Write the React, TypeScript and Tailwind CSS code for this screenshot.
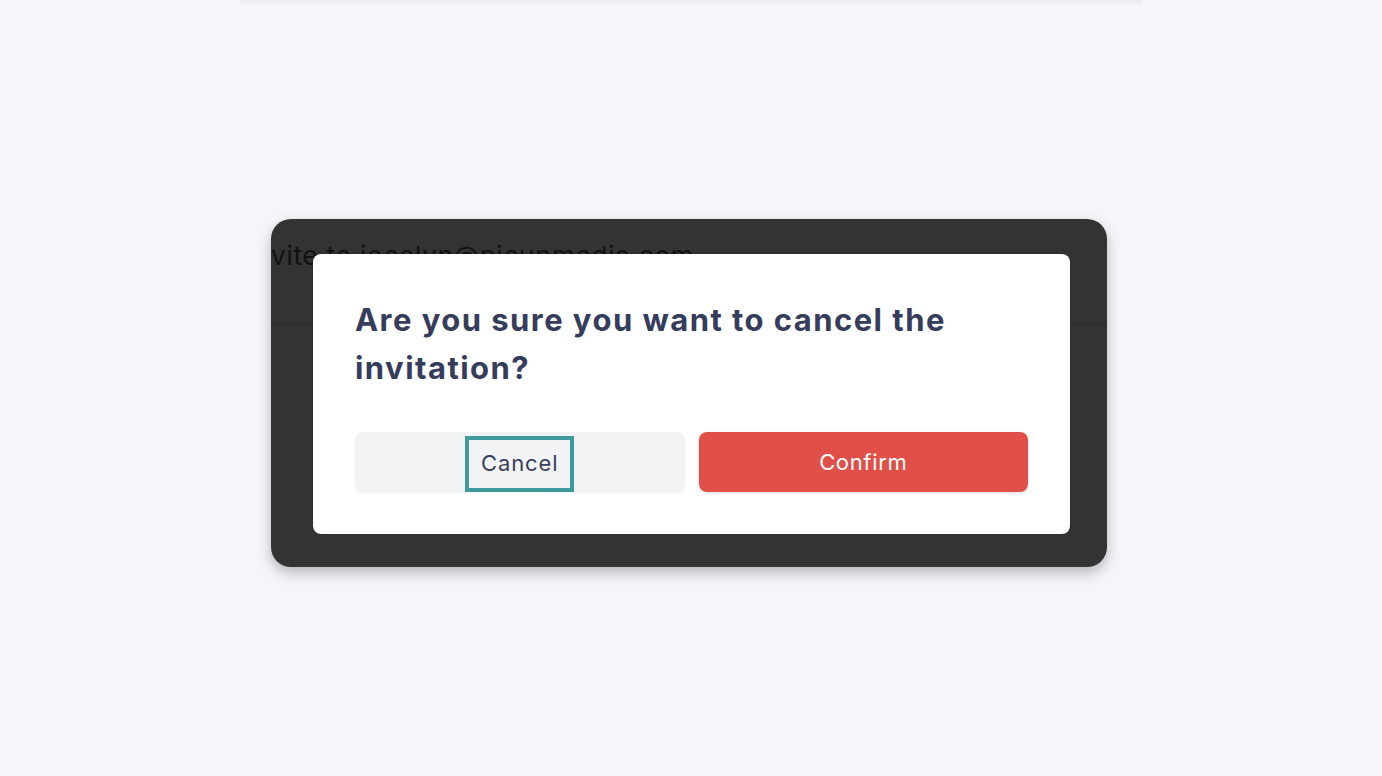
export default function App() {
  return (
    <div className="relative flex min-h-[776px] w-full items-center justify-center bg-[#f5f5fa] font-['Inter',sans-serif]">
      <div className="absolute left-[240px] right-[240px] top-0 h-[7px] bg-gradient-to-b from-[#ebebf0] to-[#f5f5fa]" />

      <div className="relative mb-[-10px] mr-[4px] h-[348px] w-[836px] overflow-hidden rounded-[20px] bg-[#333333] shadow-[0_6px_14px_rgba(0,0,0,0.25)]">
        <div className="h-[105px] border-b border-[#2b2b2b] pt-[20px]">
          <p className="whitespace-nowrap text-[26px] leading-[34px] tracking-[0.03em] text-[#111111]">vite to jocelyn@picupmedia.com</p>
        </div>

        <div className="absolute left-[42px] top-[35px] w-[757px] rounded-[8px] bg-white px-[42px] pb-[42px] pt-[42px] shadow-[0_0_2px_rgba(0,0,0,0.2)]">
          <h2 className="text-[31px] font-bold leading-[48px] tracking-[0.047em] text-[#363c5b]">
            Are you sure you want to cancel the invitation?
          </h2>
          <div className="mt-[40px] grid grid-cols-2 gap-[14px]">
            <button className="flex h-[60px] items-center justify-center rounded-[8px] bg-[#f2f3f5] shadow-[0_1px_2px_rgba(0,0,0,0.05)]">
              <span className="mt-[4px] flex h-[56px] items-center border-4 border-[#3f9a9e] px-[12px] pb-[2px] text-[22px] tracking-[0.04em] text-[#3a3f5c]">
                Cancel
              </span>
            </button>
            <button className="flex h-[60px] items-center justify-center rounded-[8px] bg-[#e04f48] text-[22px] tracking-[0.03em] text-white shadow-[0_1px_3px_rgba(0,0,0,0.15)]">
              Confirm
            </button>
          </div>
        </div>
      </div>
    </div>
  )
}
